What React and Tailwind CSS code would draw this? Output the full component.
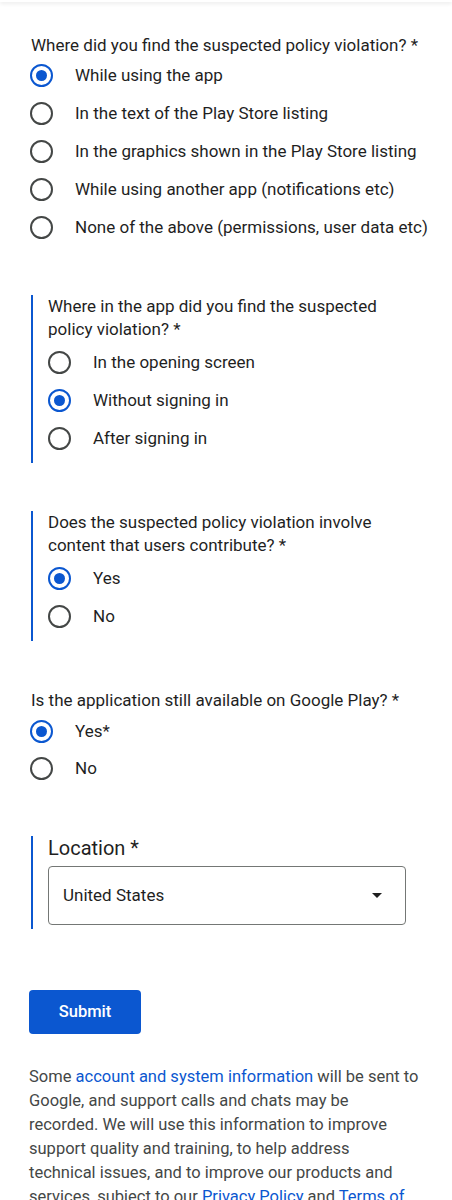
import { useState } from 'react';

const font = { fontFamily: 'Roboto, "Noto Sans", sans-serif' };

function Radio({ checked, label, onClick, rowClass = 'h-[38px]' }) {
    return (
        <button type="button" onClick={onClick} className={`flex items-center ${rowClass} w-full text-left`}>
            <span
                className={`w-[23px] h-[23px] rounded-full border-2 flex items-center justify-center shrink-0 ${checked ? 'border-[#0b57d0]' : 'border-[#444746]'}`}
            >
                {checked && <span className="w-[11px] h-[11px] rounded-full bg-[#0b57d0]"></span>}
            </span>
            <span className="ml-[22px] text-[17px] text-[#1f1f1f] leading-[23px] whitespace-nowrap">{label}</span>
        </button>
    );
}

function Question({ title, options, value, onChange, bordered, className = '', rowClass }) {
    return (
        <div className={`${bordered ? 'border-l-2 border-[#0b57d0] pl-[15px] pb-[6px] ml-[1px]' : ''} ${className}`}>
            <p className={`text-[17px] leading-[23px] text-[#1f1f1f] ${bordered ? 'pr-10 mb-[2px]' : 'ml-[1px] whitespace-nowrap'}`}>{title}</p>
            <div className="flex flex-col">
                {options.map((o, i) => (
                    <Radio key={o} label={o} rowClass={rowClass} checked={value === i} onClick={() => onChange(i)} />
                ))}
            </div>
        </div>
    );
}

export default function App() {
    const [q1, setQ1] = useState(0);
    const [q2, setQ2] = useState(1);
    const [q3, setQ3] = useState(0);
    const [q4, setQ4] = useState(0);

    return (
        <div className="bg-white min-h-[1200px] overflow-hidden" style={font}>
            {/* top app bar edge */}
            <div className="h-[2px] bg-white shadow-[0_1px_4px_rgba(0,0,0,0.15)]"></div>

            <div className="px-[30px] pt-[32px]">
                <Question
                    title="Where did you find the suspected policy violation? *"
                    options={[
                        'While using the app',
                        'In the text of the Play Store listing',
                        'In the graphics shown in the Play Store listing',
                        'While using another app (notifications etc)',
                        'None of the above (permissions, user data etc)',
                    ]}
                    value={q1}
                    onChange={setQ1}
                    rowClass="h-[38px] first:-mt-[1px]"
                />

                <Question
                    bordered
                    className="mt-[49px]"
                    title="Where in the app did you find the suspected policy violation? *"
                    options={['In the opening screen', 'Without signing in', 'After signing in']}
                    value={q2}
                    onChange={setQ2}
                />

                <Question
                    bordered
                    className="mt-[48px]"
                    title="Does the suspected policy violation involve content that users contribute? *"
                    options={['Yes', 'No']}
                    value={q3}
                    onChange={setQ3}
                />

                <Question
                    className="mt-[48px]"
                    title="Is the application still available on Google Play? *"
                    options={['Yes*', 'No']}
                    value={q4}
                    onChange={setQ4}
                    rowClass="h-[37px] first:mt-[1px]"
                />

                {/* Location */}
                <div className="mt-[49px] ml-[1px] border-l-2 border-[#0b57d0] pl-[15px] pb-[4px]">
                    <p className="text-[20px] leading-[24px] text-[#1f1f1f]">Location *</p>
                    <div className="mt-[6px] h-[59px] w-[358px] border border-[#747775] rounded-[4px] flex items-center justify-between pl-[14px] pr-[23px]">
                        <span className="text-[17px] text-[#1f1f1f]">United States</span>
                        <svg width="10" height="5" viewBox="0 0 10 5">
                            <path d="M0 0 L10 0 L5 5 Z" fill="#1f1f1f" />
                        </svg>
                    </div>
                </div>

                <button
                    type="button"
                    className="block mt-[61px] -ml-[1px] h-[44px] w-[112px] rounded-[4px] bg-[#0b57d0] text-white text-[16.5px] font-medium"
                >
                    Submit
                </button>

                <p className="mt-[31px] -ml-[1px] mr-[3px] text-[16.5px] leading-[24px] text-[#444746]">
                    Some <a href="#" className="text-[#0b57d0]">account and system information</a> will be sent to
                    Google, and support calls and chats may be recorded. We will use this information to improve
                    support quality and training, to help address technical issues, and to improve our products and
                    services, subject to our <a href="#" className="text-[#0b57d0]">Privacy Policy</a> and{' '}
                    <a href="#" className="text-[#0b57d0]">Terms of Service</a>.
                </p>
            </div>
        </div>
    );
}
